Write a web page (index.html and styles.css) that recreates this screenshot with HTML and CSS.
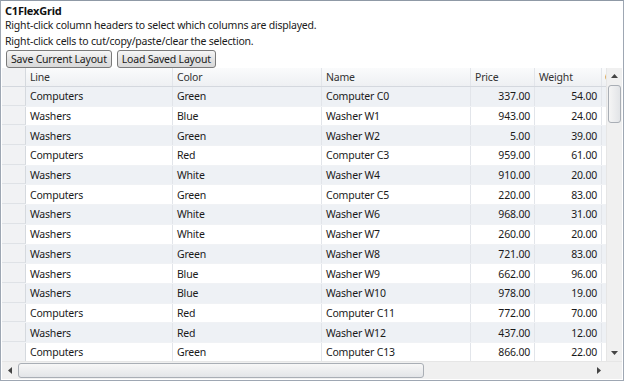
FILE: index.html
```html
<!DOCTYPE html>
<html>
<head>
<meta charset="utf-8">
<link rel="stylesheet" href="styles.css">
</head>
<body>
<div class="window">
  <div class="intro">
    <div class="title">C1FlexGrid</div>
    <div class="line">Right-click column headers to select which columns are displayed.</div>
    <div class="line">Right-click cells to cut/copy/paste/clear the selection.</div>
  </div>
  <div class="buttons">
    <button class="btn btn-save">Save Current Layout</button>
    <button class="btn btn-load">Load Saved Layout</button>
  </div>
  <div class="grid">
    <div class="grid-main">
      <div class="cells">
        <div class="row head">
          <div class="c rh"></div>
          <div class="c line-col">Line</div>
          <div class="c color-col">Color</div>
          <div class="c name-col">Name</div>
          <div class="c price-col">Price</div>
          <div class="c weight-col">Weight</div>
          <div class="c extra-col">C</div>
        </div>
        <div id="rows"></div>
      </div>
      <div class="vscroll">
        <div class="sb-btn up"><svg width="7" height="4" viewBox="0 0 7 4"><path d="M0 4 L3.5 0 L7 4 Z" fill="#444"/></svg></div>
        <div class="vthumb"></div>
        <div class="vtrack"></div>
        <div class="sb-btn down"><svg width="7" height="4" viewBox="0 0 7 4"><path d="M0 0 L3.5 4 L7 0 Z" fill="#444"/></svg></div>
      </div>
    </div>
    <div class="hscroll">
      <div class="sb-btn left"><svg width="4" height="7" viewBox="0 0 4 7"><path d="M4 0 L0 3.5 L4 7 Z" fill="#444"/></svg></div>
      <div class="hthumb"></div>
      <div class="htrack"></div>
      <div class="sb-btn right"><svg width="4" height="7" viewBox="0 0 4 7"><path d="M0 0 L4 3.5 L0 7 Z" fill="#444"/></svg></div>
      <div class="corner"></div>
    </div>
  </div>
</div>
<script src="app.js"></script>
</body>
</html>
```

FILE: app.js
```js
const data = [
  ["Computers","Green","Computer C0","337.00","54.00"],
  ["Washers","Blue","Washer W1","943.00","24.00"],
  ["Washers","Green","Washer W2","5.00","39.00"],
  ["Computers","Red","Computer C3","959.00","61.00"],
  ["Washers","White","Washer W4","910.00","20.00"],
  ["Computers","Green","Computer C5","220.00","83.00"],
  ["Washers","White","Washer W6","968.00","31.00"],
  ["Washers","White","Washer W7","260.00","20.00"],
  ["Washers","Green","Washer W8","721.00","83.00"],
  ["Washers","Blue","Washer W9","662.00","96.00"],
  ["Washers","Blue","Washer W10","978.00","19.00"],
  ["Computers","Red","Computer C11","772.00","70.00"],
  ["Washers","Red","Washer W12","437.00","12.00"],
  ["Computers","Green","Computer C13","866.00","22.00"]
];
const rows = document.getElementById("rows");
data.forEach((r, i) => {
  const row = document.createElement("div");
  row.className = "row body" + (i % 2 === 0 ? " alt" : "");
  row.innerHTML =
    '<div class="c rh"></div>' +
    '<div class="c line-col">' + r[0] + '</div>' +
    '<div class="c color-col">' + r[1] + '</div>' +
    '<div class="c name-col">' + r[2] + '</div>' +
    '<div class="c price-col num">' + r[3] + '</div>' +
    '<div class="c weight-col num">' + r[4] + '</div>' +
    '<div class="c extra-col"></div>';
  rows.appendChild(row);
});
```

FILE: styles.css
```css
html, body {
  margin: 0;
  padding: 0;
  background: #ffffff;
}
body {
  font-family: "Noto Sans", "Open Sans", sans-serif;
  font-size: 10.5px;
  letter-spacing: -0.2px;
  color: #1a1a1a;
}
.window {
  width: 624px;
  height: 381px;
  box-sizing: border-box;
  border: 1px solid #9ea7b3;
  border-top-color: #8f99a6;
  padding: 1px;
  display: flex;
  flex-direction: column;
  overflow: hidden;
}
.intro {
  padding: 1px 0 0 3px;
}
.title {
  font-weight: bold;
  font-size: 11px;
  line-height: 15px;
  color: #111;
}
.line {
  line-height: 15.5px;
}
.line:first-of-type {
  padding-top: 0.5px;
}
.buttons {
  display: flex;
  gap: 5px;
  padding: 1px 0 0 4px;
  height: 19px;
  box-sizing: border-box;
}
.btn {
  font-family: inherit;
  font-size: 10.5px;
  letter-spacing: -0.2px;
  white-space: nowrap;
  color: #1a1a1a;
  height: 18px;
  padding: 0 4px;
  border: 1px solid #7a7a7a;
  border-radius: 3px;
  background: linear-gradient(#f6f6f6, #e4e4e4 50%, #d9d9d9);
  line-height: 15px;
  margin: 0;
}
.grid {
  flex: 1;
  display: flex;
  flex-direction: column;
  min-height: 0;
}
.grid-main {
  flex: 1;
  display: flex;
  min-height: 0;
}
.cells {
  flex: 1;
  overflow: hidden;
}
.row {
  display: flex;
  height: 19.7px;
  box-sizing: border-box;
}
.row.head {
  height: 19px;
  background: linear-gradient(#fafbfc, #eef0f3);
  border-bottom: 1px solid #d4d8de;
  color: #333;
}
.row.body {
  background: #ffffff;
  border-bottom: 1px solid #f0f2f5;
}
.row.body.alt {
  background: #eef1f5;
}
.c {
  box-sizing: border-box;
  border-right: 1px solid #e2e5ea;
  padding: 0 4px;
  white-space: nowrap;
  overflow: hidden;
  display: flex;
  align-items: center;
  flex: none;
}
.rh {
  width: 24px;
  background: #f1f2f4;
  border-right: 1px solid #d5d9de;
}
.row.body .rh {
  border-bottom: 1px solid #dfe2e6;
}
.line-col { width: 147px; }
.color-col { width: 149px; }
.name-col { width: 149px; }
.price-col { width: 64px; }
.weight-col { width: 67px; }
.extra-col { width: 12px; border-right: none; padding-left: 3px; }
.num {
  justify-content: flex-end;
  padding-right: 4px;
}
.vscroll {
  width: 15px;
  flex: none;
  display: flex;
  flex-direction: column;
  background: #f0f0f0;
  border-left: 1px solid #e6e6e6;
}
.sb-btn {
  display: flex;
  align-items: center;
  justify-content: center;
  flex: none;
}
.vscroll .sb-btn {
  height: 16px;
}
.vthumb {
  height: 36px;
  margin: 1px 1px;
  border: 1px solid #a9aeb5;
  border-radius: 3px;
  background: linear-gradient(90deg, #f5f5f5, #e2e4e7);
  flex: none;
}
.vtrack {
  flex: 1;
}
.hscroll {
  height: 17px;
  flex: none;
  display: flex;
  background: #f0f0f0;
  border-top: 1px solid #e6e6e6;
}
.hscroll .sb-btn {
  width: 16px;
}
.hthumb {
  width: 406px;
  margin: 1px 0;
  border: 1px solid #a9aeb5;
  border-radius: 3px;
  background: linear-gradient(#f7f7f7, #e3e5e8);
  flex: none;
  box-sizing: border-box;
}
.htrack {
  flex: 1;
}
.corner {
  width: 15px;
  background: #f0f0f0;
}
```
